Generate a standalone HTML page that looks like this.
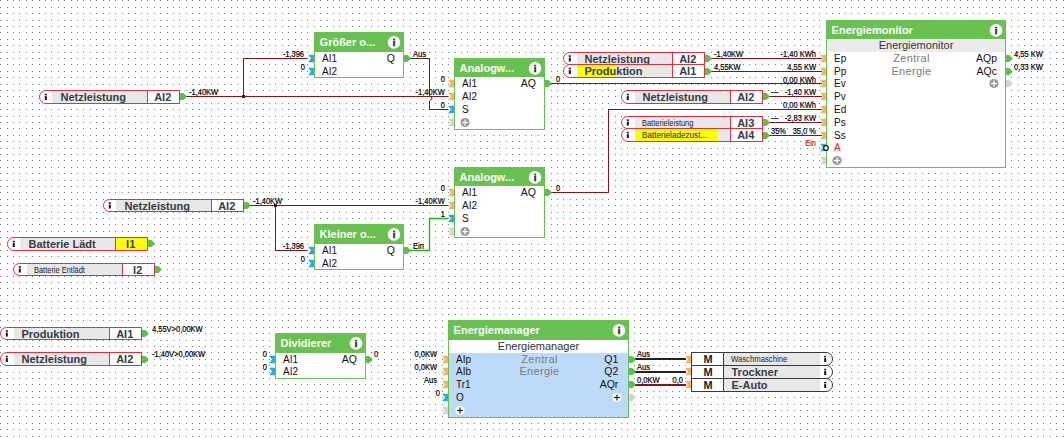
<!DOCTYPE html>
<html><head><meta charset="utf-8"><style>
html,body{margin:0;padding:0;width:1064px;height:439px;overflow:hidden;background:#fff;}
text{font-family:"Liberation Sans", sans-serif;}
</style></head><body>
<svg width="1064" height="439" viewBox="0 0 1064 439" style="position:absolute;left:0;top:0;font-family:&quot;Liberation Sans&quot;, sans-serif"><defs><pattern id="g" width="32" height="32" patternUnits="userSpaceOnUse"><rect x="0" y="0" width="1" height="1" fill="#7a7a7a"/><rect x="0" y="7" width="1" height="1" fill="#7a7a7a"/><rect x="0" y="13" width="1" height="1" fill="#7a7a7a"/><rect x="0" y="20" width="1" height="1" fill="#7a7a7a"/><rect x="0" y="26" width="1" height="1" fill="#7a7a7a"/><rect x="7" y="0" width="1" height="1" fill="#7a7a7a"/><rect x="7" y="7" width="1" height="1" fill="#7a7a7a"/><rect x="7" y="13" width="1" height="1" fill="#7a7a7a"/><rect x="7" y="20" width="1" height="1" fill="#7a7a7a"/><rect x="7" y="26" width="1" height="1" fill="#7a7a7a"/><rect x="13" y="0" width="1" height="1" fill="#7a7a7a"/><rect x="13" y="7" width="1" height="1" fill="#7a7a7a"/><rect x="13" y="13" width="1" height="1" fill="#7a7a7a"/><rect x="13" y="20" width="1" height="1" fill="#7a7a7a"/><rect x="13" y="26" width="1" height="1" fill="#7a7a7a"/><rect x="19" y="0" width="1" height="1" fill="#7a7a7a"/><rect x="19" y="7" width="1" height="1" fill="#7a7a7a"/><rect x="19" y="13" width="1" height="1" fill="#7a7a7a"/><rect x="19" y="20" width="1" height="1" fill="#7a7a7a"/><rect x="19" y="26" width="1" height="1" fill="#7a7a7a"/><rect x="26" y="0" width="1" height="1" fill="#7a7a7a"/><rect x="26" y="7" width="1" height="1" fill="#7a7a7a"/><rect x="26" y="13" width="1" height="1" fill="#7a7a7a"/><rect x="26" y="20" width="1" height="1" fill="#7a7a7a"/><rect x="26" y="26" width="1" height="1" fill="#7a7a7a"/></pattern></defs><rect width="1064" height="439" fill="#fff"/><rect width="1064" height="439" fill="url(#g)"/><g><line x1="186.00" y1="96.50" x2="448.00" y2="96.50" stroke="#8a1216" stroke-width="1" shape-rendering="crispEdges"/><polyline points="243.50,96.50 243.50,58.50 307.00,58.50" fill="none" stroke="#8a1216" stroke-width="1" shape-rendering="crispEdges" /><rect x="242.00" y="95.00" width="3.00" height="3.00" fill="#5a0c0f" shape-rendering="crispEdges"/><polyline points="410.00,58.50 429.50,58.50 429.50,95.50" fill="none" stroke="#333333" stroke-width="1" shape-rendering="crispEdges" /><path d="M429.5,95.5 L432.0,98 L432.0,99 L429.5,100.5" fill="none" stroke="#333333" stroke-width="1"/><polyline points="429.50,100.50 429.50,109.50 448.00,109.50" fill="none" stroke="#333333" stroke-width="1" shape-rendering="crispEdges" /><line x1="551.00" y1="83.50" x2="822.00" y2="83.50" stroke="#8a1216" stroke-width="1" shape-rendering="crispEdges"/><line x1="711.00" y1="58.50" x2="822.00" y2="58.50" stroke="#8a1216" stroke-width="1" shape-rendering="crispEdges"/><line x1="711.00" y1="71.50" x2="822.00" y2="71.50" stroke="#8a1216" stroke-width="1" shape-rendering="crispEdges"/><line x1="768.00" y1="96.50" x2="822.00" y2="96.50" stroke="#8a1216" stroke-width="1" shape-rendering="crispEdges"/><polyline points="551.00,192.50 608.50,192.50 608.50,109.50 822.00,109.50" fill="none" stroke="#8a1216" stroke-width="1" shape-rendering="crispEdges" /><line x1="768.00" y1="122.50" x2="822.00" y2="122.50" stroke="#8a1216" stroke-width="1" shape-rendering="crispEdges"/><line x1="768.00" y1="135.50" x2="822.00" y2="135.50" stroke="#8a1216" stroke-width="1" shape-rendering="crispEdges"/><line x1="250.00" y1="205.50" x2="448.00" y2="205.50" stroke="#8a1216" stroke-width="1" shape-rendering="crispEdges"/><polyline points="275.50,205.50 275.50,250.50 307.00,250.50" fill="none" stroke="#8a1216" stroke-width="1" shape-rendering="crispEdges" /><rect x="274.00" y="204.00" width="3.00" height="3.00" fill="#5a0c0f" shape-rendering="crispEdges"/><polyline points="410,250.5 429.5,250.5 429.5,218.5 448,218.5" fill="none" stroke="#22b422" stroke-width="1.4"/><line x1="635" y1="359" x2="686" y2="359" stroke="#222" stroke-width="2"/><line x1="635" y1="372" x2="686" y2="372" stroke="#222" stroke-width="2"/><line x1="635" y1="385" x2="686" y2="385" stroke="#8a1216" stroke-width="2"/><rect x="314.00" y="32.00" width="90.00" height="46.00" fill="#69c152" shape-rendering="crispEdges"/><rect x="315.00" y="52.00" width="88.00" height="25.00" fill="#fff" shape-rendering="crispEdges"/><text x="319.60" y="45.50" font-size="11" font-weight="bold" fill="#fff" text-anchor="start" >Größer o...</text><circle cx="394.00" cy="42.40" r="6.3" fill="#fff"/><text x="394.00" y="45.80" font-size="9.5" font-weight="bold" fill="#222" stroke="#222" stroke-width="0.45" text-anchor="middle">i</text><polygon points="308.00,54.70 314.00,54.70 314.00,62.30 308.00,62.30 311.00,58.50" fill="#26aee0"/><text x="322.00" y="62.00" font-size="10" font-weight="normal" fill="#111" text-anchor="start" >AI1</text><polygon points="308.00,67.70 314.00,67.70 314.00,75.30 308.00,75.30 311.00,71.50" fill="#26aee0"/><text x="322.00" y="75.00" font-size="10" font-weight="normal" fill="#111" text-anchor="start" >AI2</text><path d="M404.00,55.00 L407.00,55.00 Q407.60,55.00 408.20,55.70 L410.30,57.80 Q410.90,58.50 410.30,59.20 L408.20,61.30 Q407.60,62.00 407.00,62.00 L404.00,62.00 Z" fill="#5fbf4c"/><text x="395.00" y="62.00" font-size="10.5" font-weight="normal" fill="#111" text-anchor="end" >Q</text><rect x="454.00" y="58.00" width="91.00" height="72.00" fill="#69c152" shape-rendering="crispEdges"/><rect x="455.00" y="77.00" width="89.00" height="52.00" fill="#fff" shape-rendering="crispEdges"/><text x="459.60" y="71.50" font-size="11" font-weight="bold" fill="#fff" text-anchor="start" >Analogw...</text><circle cx="535.00" cy="68.40" r="6.3" fill="#fff"/><text x="535.00" y="71.80" font-size="9.5" font-weight="bold" fill="#222" stroke="#222" stroke-width="0.45" text-anchor="middle">i</text><polygon points="448.00,79.70 454.00,79.70 454.00,87.30 448.00,87.30 451.00,83.50" fill="#f5b366"/><text x="462.00" y="87.00" font-size="10" font-weight="normal" fill="#111" text-anchor="start" >AI1</text><polygon points="448.00,92.70 454.00,92.70 454.00,100.30 448.00,100.30 451.00,96.50" fill="#f5b366"/><text x="462.00" y="100.00" font-size="10" font-weight="normal" fill="#111" text-anchor="start" >AI2</text><polygon points="448.00,105.70 454.00,105.70 454.00,113.30 448.00,113.30 451.00,109.50" fill="#26aee0"/><text x="462.00" y="113.00" font-size="10" font-weight="normal" fill="#111" text-anchor="start" >S</text><polygon points="448.00,118.70 454.00,118.70 454.00,126.30 448.00,126.30 451.00,122.50" fill="#d4d4d4"/><circle cx="465.00" cy="122.50" r="4.6" fill="#9a9a9a"/><rect x="462.00" y="121.90" width="6" height="1.2" fill="#fff"/><rect x="464.40" y="119.50" width="1.2" height="6" fill="#fff"/><path d="M545.00,80.00 L548.00,80.00 Q548.60,80.00 549.20,80.70 L551.30,82.80 Q551.90,83.50 551.30,84.20 L549.20,86.30 Q548.60,87.00 548.00,87.00 L545.00,87.00 Z" fill="#5fbf4c"/><text x="536.00" y="87.00" font-size="10.5" font-weight="normal" fill="#111" text-anchor="end" >AQ</text><rect x="454.00" y="167.00" width="91.00" height="71.00" fill="#69c152" shape-rendering="crispEdges"/><rect x="455.00" y="186.00" width="89.00" height="51.00" fill="#fff" shape-rendering="crispEdges"/><text x="459.60" y="180.50" font-size="11" font-weight="bold" fill="#fff" text-anchor="start" >Analogw...</text><circle cx="535.00" cy="177.40" r="6.3" fill="#fff"/><text x="535.00" y="180.80" font-size="9.5" font-weight="bold" fill="#222" stroke="#222" stroke-width="0.45" text-anchor="middle">i</text><polygon points="448.00,188.70 454.00,188.70 454.00,196.30 448.00,196.30 451.00,192.50" fill="#f5b366"/><text x="462.00" y="196.00" font-size="10" font-weight="normal" fill="#111" text-anchor="start" >AI1</text><polygon points="448.00,201.70 454.00,201.70 454.00,209.30 448.00,209.30 451.00,205.50" fill="#f5b366"/><text x="462.00" y="209.00" font-size="10" font-weight="normal" fill="#111" text-anchor="start" >AI2</text><polygon points="448.00,214.70 454.00,214.70 454.00,222.30 448.00,222.30 451.00,218.50" fill="#26aee0"/><text x="462.00" y="222.00" font-size="10" font-weight="normal" fill="#111" text-anchor="start" >S</text><polygon points="448.00,227.70 454.00,227.70 454.00,235.30 448.00,235.30 451.00,231.50" fill="#d4d4d4"/><circle cx="465.00" cy="231.50" r="4.6" fill="#9a9a9a"/><rect x="462.00" y="230.90" width="6" height="1.2" fill="#fff"/><rect x="464.40" y="228.50" width="1.2" height="6" fill="#fff"/><path d="M545.00,189.00 L548.00,189.00 Q548.60,189.00 549.20,189.70 L551.30,191.80 Q551.90,192.50 551.30,193.20 L549.20,195.30 Q548.60,196.00 548.00,196.00 L545.00,196.00 Z" fill="#5fbf4c"/><text x="536.00" y="196.00" font-size="10.5" font-weight="normal" fill="#111" text-anchor="end" >AQ</text><rect x="314.00" y="224.00" width="90.00" height="46.00" fill="#69c152" shape-rendering="crispEdges"/><rect x="315.00" y="244.00" width="88.00" height="25.00" fill="#fff" shape-rendering="crispEdges"/><text x="319.60" y="237.50" font-size="11" font-weight="bold" fill="#fff" text-anchor="start" >Kleiner o...</text><circle cx="394.00" cy="234.40" r="6.3" fill="#fff"/><text x="394.00" y="237.80" font-size="9.5" font-weight="bold" fill="#222" stroke="#222" stroke-width="0.45" text-anchor="middle">i</text><polygon points="308.00,246.70 314.00,246.70 314.00,254.30 308.00,254.30 311.00,250.50" fill="#26aee0"/><text x="322.00" y="254.00" font-size="10" font-weight="normal" fill="#111" text-anchor="start" >AI1</text><polygon points="308.00,259.70 314.00,259.70 314.00,267.30 308.00,267.30 311.00,263.50" fill="#26aee0"/><text x="322.00" y="267.00" font-size="10" font-weight="normal" fill="#111" text-anchor="start" >AI2</text><path d="M404.00,247.00 L407.00,247.00 Q407.60,247.00 408.20,247.70 L410.30,249.80 Q410.90,250.50 410.30,251.20 L408.20,253.30 Q407.60,254.00 407.00,254.00 L404.00,254.00 Z" fill="#5fbf4c"/><text x="395.00" y="254.00" font-size="10.5" font-weight="normal" fill="#111" text-anchor="end" >Q</text><rect x="275.00" y="333.00" width="91.00" height="46.00" fill="#69c152" shape-rendering="crispEdges"/><rect x="276.00" y="353.00" width="89.00" height="25.00" fill="#fff" shape-rendering="crispEdges"/><text x="280.60" y="346.50" font-size="11" font-weight="bold" fill="#fff" text-anchor="start" >Dividierer</text><circle cx="356.00" cy="343.40" r="6.3" fill="#fff"/><text x="356.00" y="346.80" font-size="9.5" font-weight="bold" fill="#222" stroke="#222" stroke-width="0.45" text-anchor="middle">i</text><polygon points="269.00,355.70 275.00,355.70 275.00,363.30 269.00,363.30 272.00,359.50" fill="#26aee0"/><text x="283.00" y="363.00" font-size="10" font-weight="normal" fill="#111" text-anchor="start" >AI1</text><polygon points="269.00,367.70 275.00,367.70 275.00,375.30 269.00,375.30 272.00,371.50" fill="#26aee0"/><text x="283.00" y="375.00" font-size="10" font-weight="normal" fill="#111" text-anchor="start" >AI2</text><path d="M366.00,356.00 L369.00,356.00 Q369.60,356.00 370.20,356.70 L372.30,358.80 Q372.90,359.50 372.30,360.20 L370.20,362.30 Q369.60,363.00 369.00,363.00 L366.00,363.00 Z" fill="#5fbf4c"/><text x="357.00" y="363.00" font-size="10.5" font-weight="normal" fill="#111" text-anchor="end" >AQ</text><rect x="826.00" y="20.00" width="180.00" height="148.00" fill="#69c152" shape-rendering="crispEdges"/><rect x="827.00" y="39.00" width="178.00" height="128.00" fill="#fff" shape-rendering="crispEdges"/><rect x="827.00" y="39.00" width="178.00" height="13.00" fill="#ebebeb" shape-rendering="crispEdges"/><text x="916.00" y="49.30" font-size="11" font-weight="normal" fill="#333" text-anchor="middle" >Energiemonitor</text><text x="831.60" y="33.50" font-size="11" font-weight="bold" fill="#fff" text-anchor="start" >Energiemonitor</text><circle cx="996.00" cy="30.40" r="6.3" fill="#fff"/><text x="996.00" y="33.80" font-size="9.5" font-weight="bold" fill="#222" stroke="#222" stroke-width="0.45" text-anchor="middle">i</text><polygon points="820.00,54.70 826.00,54.70 826.00,62.30 820.00,62.30 823.00,58.50" fill="#f5b366"/><text x="834.00" y="62.00" font-size="10" font-weight="normal" fill="#111" text-anchor="start" >Ep</text><polygon points="820.00,67.70 826.00,67.70 826.00,75.30 820.00,75.30 823.00,71.50" fill="#f5b366"/><text x="834.00" y="75.00" font-size="10" font-weight="normal" fill="#111" text-anchor="start" >Pp</text><polygon points="820.00,79.70 826.00,79.70 826.00,87.30 820.00,87.30 823.00,83.50" fill="#f5b366"/><text x="834.00" y="87.00" font-size="10" font-weight="normal" fill="#111" text-anchor="start" >Ev</text><polygon points="820.00,92.70 826.00,92.70 826.00,100.30 820.00,100.30 823.00,96.50" fill="#f5b366"/><text x="834.00" y="100.00" font-size="10" font-weight="normal" fill="#111" text-anchor="start" >Pv</text><polygon points="820.00,105.70 826.00,105.70 826.00,113.30 820.00,113.30 823.00,109.50" fill="#f5b366"/><text x="834.00" y="113.00" font-size="10" font-weight="normal" fill="#111" text-anchor="start" >Ed</text><polygon points="820.00,118.70 826.00,118.70 826.00,126.30 820.00,126.30 823.00,122.50" fill="#f5b366"/><text x="834.00" y="126.00" font-size="10" font-weight="normal" fill="#111" text-anchor="start" >Ps</text><polygon points="820.00,131.70 826.00,131.70 826.00,139.30 820.00,139.30 823.00,135.50" fill="#f5b366"/><text x="834.00" y="139.00" font-size="10" font-weight="normal" fill="#111" text-anchor="start" >Ss</text><polygon points="820.00,143.70 826.00,143.70 826.00,151.30 820.00,151.30 823.00,147.50" fill="#26aee0"/><text x="834.00" y="151.00" font-size="10" font-weight="normal" fill="#e0202a" text-anchor="start" >A</text><polygon points="820.00,156.70 826.00,156.70 826.00,164.30 820.00,164.30 823.00,160.50" fill="#d4d4d4"/><circle cx="837.00" cy="160.50" r="4.6" fill="#9a9a9a"/><rect x="834.00" y="159.90" width="6" height="1.2" fill="#fff"/><rect x="836.40" y="157.50" width="1.2" height="6" fill="#fff"/><path d="M1006.00,55.00 L1009.00,55.00 Q1009.60,55.00 1010.20,55.70 L1012.30,57.80 Q1012.90,58.50 1012.30,59.20 L1010.20,61.30 Q1009.60,62.00 1009.00,62.00 L1006.00,62.00 Z" fill="#5fbf4c"/><text x="997.00" y="62.00" font-size="10.5" font-weight="normal" fill="#111" text-anchor="end" >AQp</text><path d="M1006.00,68.00 L1009.00,68.00 Q1009.60,68.00 1010.20,68.70 L1012.30,70.80 Q1012.90,71.50 1012.30,72.20 L1010.20,74.30 Q1009.60,75.00 1009.00,75.00 L1006.00,75.00 Z" fill="#5fbf4c"/><text x="997.00" y="75.00" font-size="10.5" font-weight="normal" fill="#111" text-anchor="end" >AQc</text><path d="M1006.00,80.00 L1009.00,80.00 Q1009.60,80.00 1010.20,80.70 L1012.30,82.80 Q1012.90,83.50 1012.30,84.20 L1010.20,86.30 Q1009.60,87.00 1009.00,87.00 L1006.00,87.00 Z" fill="#d4d4d4"/><circle cx="994.00" cy="83.50" r="4.6" fill="#9a9a9a"/><rect x="991.00" y="82.90" width="6" height="1.2" fill="#fff"/><rect x="993.40" y="80.50" width="1.2" height="6" fill="#fff"/><text x="911.50" y="62.00" font-size="11" font-weight="normal" fill="#7c7c7c" text-anchor="middle" letter-spacing="0.3">Zentral</text><text x="911.50" y="75.00" font-size="11" font-weight="normal" fill="#7c7c7c" text-anchor="middle" letter-spacing="0.3">Energie</text><rect x="448.00" y="320.00" width="181.00" height="98.00" fill="#69c152" shape-rendering="crispEdges"/><rect x="449.00" y="340.00" width="179.00" height="77.00" fill="#bddbf8" shape-rendering="crispEdges"/><rect x="449.00" y="340.00" width="179.00" height="13.00" fill="#ffffff" shape-rendering="crispEdges"/><text x="538.50" y="350.30" font-size="11" font-weight="normal" fill="#333" text-anchor="middle" >Energiemanager</text><text x="453.60" y="333.50" font-size="11" font-weight="bold" fill="#fff" text-anchor="start" >Energiemanager</text><circle cx="619.00" cy="330.40" r="6.3" fill="#fff"/><text x="619.00" y="333.80" font-size="9.5" font-weight="bold" fill="#222" stroke="#222" stroke-width="0.45" text-anchor="middle">i</text><polygon points="442.00,355.70 448.00,355.70 448.00,363.30 442.00,363.30 445.00,359.50" fill="#f5b366"/><text x="456.00" y="363.00" font-size="10" font-weight="normal" fill="#111" text-anchor="start" >AIp</text><polygon points="442.00,367.70 448.00,367.70 448.00,375.30 442.00,375.30 445.00,371.50" fill="#f5b366"/><text x="456.00" y="375.00" font-size="10" font-weight="normal" fill="#111" text-anchor="start" >AIb</text><polygon points="442.00,380.70 448.00,380.70 448.00,388.30 442.00,388.30 445.00,384.50" fill="#f5b366"/><text x="456.00" y="388.00" font-size="10" font-weight="normal" fill="#111" text-anchor="start" >Tr1</text><polygon points="442.00,393.70 448.00,393.70 448.00,401.30 442.00,401.30 445.00,397.50" fill="#26aee0"/><text x="456.00" y="401.00" font-size="10" font-weight="normal" fill="#111" text-anchor="start" >O</text><polygon points="442.00,406.70 448.00,406.70 448.00,414.30 442.00,414.30 445.00,410.50" fill="#d4d4d4"/><circle cx="460.00" cy="410.50" r="4.6" fill="#fff"/><rect x="457.00" y="409.90" width="6" height="1.2" fill="#222"/><rect x="459.40" y="407.50" width="1.2" height="6" fill="#222"/><path d="M629.00,356.00 L632.00,356.00 Q632.60,356.00 633.20,356.70 L635.30,358.80 Q635.90,359.50 635.30,360.20 L633.20,362.30 Q632.60,363.00 632.00,363.00 L629.00,363.00 Z" fill="#5fbf4c"/><text x="618.30" y="363.00" font-size="10.5" font-weight="normal" fill="#111" text-anchor="end" >Q1</text><path d="M629.00,368.00 L632.00,368.00 Q632.60,368.00 633.20,368.70 L635.30,370.80 Q635.90,371.50 635.30,372.20 L633.20,374.30 Q632.60,375.00 632.00,375.00 L629.00,375.00 Z" fill="#5fbf4c"/><text x="618.30" y="375.00" font-size="10.5" font-weight="normal" fill="#111" text-anchor="end" >Q2</text><path d="M629.00,381.00 L632.00,381.00 Q632.60,381.00 633.20,381.70 L635.30,383.80 Q635.90,384.50 635.30,385.20 L633.20,387.30 Q632.60,388.00 632.00,388.00 L629.00,388.00 Z" fill="#5fbf4c"/><text x="618.30" y="388.00" font-size="10.5" font-weight="normal" fill="#111" text-anchor="end" >AQr</text><path d="M629.00,394.00 L632.00,394.00 Q632.60,394.00 633.20,394.70 L635.30,396.80 Q635.90,397.50 635.30,398.20 L633.20,400.30 Q632.60,401.00 632.00,401.00 L629.00,401.00 Z" fill="#d4d4d4"/><circle cx="617.00" cy="397.50" r="4.6" fill="#fff"/><rect x="614.00" y="396.90" width="6" height="1.2" fill="#222"/><rect x="616.40" y="394.50" width="1.2" height="6" fill="#222"/><text x="539.50" y="363.00" font-size="11" font-weight="normal" fill="#7c7c7c" text-anchor="middle" letter-spacing="0.3">Zentral</text><text x="539.50" y="375.00" font-size="11" font-weight="normal" fill="#7c7c7c" text-anchor="middle" letter-spacing="0.3">Energie</text><circle cx="826" cy="148.00" r="2.3" fill="#fff" stroke="#111" stroke-width="1.2"/><path d="M46.00,90.50 H179.50 V103.50 H46.00 A6.50,6.50 0 0 1 46.00,90.50 Z" fill="#fff" stroke="#e2303e" stroke-width="1"/><rect x="52.00" y="91.00" width="95.00" height="12.00" fill="#e8e8e8" shape-rendering="crispEdges"/><line x1="147.50" y1="90.00" x2="147.50" y2="104.00" stroke="#e2303e" stroke-width="1" shape-rendering="crispEdges"/><rect x="44.80" y="93.80" width="2.00" height="1.60" fill="#111"/><rect x="44.80" y="96.10" width="2.00" height="3.90" fill="#111"/><text x="60.50" y="101.00" font-size="11" font-weight="bold" fill="#363b45" text-anchor="start" >Netzleistung</text><text x="162.70" y="101.00" font-size="11" font-weight="bold" fill="#363b45" text-anchor="middle" >AI2</text><path d="M180.00,93.00 L183.00,93.00 Q183.60,93.00 184.20,93.70 L186.30,95.80 Q186.90,96.50 186.30,97.20 L184.20,99.30 Q183.60,100.00 183.00,100.00 L180.00,100.00 Z" fill="#5fbf4c"/><path d="M569.50,52.50 H704.50 V64.50 H569.50 A6.00,6.00 0 0 1 569.50,52.50 Z" fill="#fff" stroke="#e2303e" stroke-width="1"/><rect x="577.00" y="53.00" width="95.00" height="11.00" fill="#e8e8e8" shape-rendering="crispEdges"/><line x1="672.50" y1="52.00" x2="672.50" y2="65.00" stroke="#e2303e" stroke-width="1" shape-rendering="crispEdges"/><rect x="568.80" y="55.30" width="2.00" height="1.60" fill="#111"/><rect x="568.80" y="57.60" width="2.00" height="3.90" fill="#111"/><text x="584.50" y="62.50" font-size="11" font-weight="bold" fill="#363b45" text-anchor="start" >Netzleistung</text><text x="687.70" y="62.50" font-size="11" font-weight="bold" fill="#363b45" text-anchor="middle" >AI2</text><path d="M705.00,55.00 L708.00,55.00 Q708.60,55.00 709.20,55.70 L711.30,57.80 Q711.90,58.50 711.30,59.20 L709.20,61.30 Q708.60,62.00 708.00,62.00 L705.00,62.00 Z" fill="#5fbf4c"/><path d="M570.00,64.50 H704.50 V77.50 H570.00 A6.50,6.50 0 0 1 570.00,64.50 Z" fill="#fff" stroke="#e2303e" stroke-width="1"/><rect x="577.00" y="65.00" width="95.00" height="12.00" fill="#e8e8e8" shape-rendering="crispEdges"/><rect x="577.00" y="65.00" width="38.00" height="12.00" fill="#ffff00" shape-rendering="crispEdges"/><line x1="672.50" y1="64.00" x2="672.50" y2="78.00" stroke="#e2303e" stroke-width="1" shape-rendering="crispEdges"/><rect x="568.80" y="67.80" width="2.00" height="1.60" fill="#111"/><rect x="568.80" y="70.10" width="2.00" height="3.90" fill="#111"/><text x="584.50" y="75.00" font-size="11" font-weight="bold" fill="#363b45" text-anchor="start" >Produktion</text><text x="687.70" y="75.00" font-size="11" font-weight="bold" fill="#363b45" text-anchor="middle" >AI1</text><path d="M705.00,68.00 L708.00,68.00 Q708.60,68.00 709.20,68.70 L711.30,70.80 Q711.90,71.50 711.30,72.20 L709.20,74.30 Q708.60,75.00 708.00,75.00 L705.00,75.00 Z" fill="#5fbf4c"/><path d="M628.00,90.50 H762.50 V103.50 H628.00 A6.50,6.50 0 0 1 628.00,90.50 Z" fill="#fff" stroke="#e2303e" stroke-width="1"/><rect x="635.00" y="91.00" width="95.00" height="12.00" fill="#e8e8e8" shape-rendering="crispEdges"/><line x1="730.50" y1="90.00" x2="730.50" y2="104.00" stroke="#e2303e" stroke-width="1" shape-rendering="crispEdges"/><rect x="626.80" y="93.80" width="2.00" height="1.60" fill="#111"/><rect x="626.80" y="96.10" width="2.00" height="3.90" fill="#111"/><text x="642.50" y="101.00" font-size="11" font-weight="bold" fill="#363b45" text-anchor="start" >Netzleistung</text><text x="745.70" y="101.00" font-size="11" font-weight="bold" fill="#363b45" text-anchor="middle" >AI2</text><path d="M763.00,93.00 L766.00,93.00 Q766.60,93.00 767.20,93.70 L769.30,95.80 Q769.90,96.50 769.30,97.20 L767.20,99.30 Q766.60,100.00 766.00,100.00 L763.00,100.00 Z" fill="#5fbf4c"/><path d="M627.50,116.50 H762.50 V128.50 H627.50 A6.00,6.00 0 0 1 627.50,116.50 Z" fill="#fff" stroke="#e2303e" stroke-width="1"/><rect x="635.00" y="117.00" width="95.00" height="11.00" fill="#e8e8e8" shape-rendering="crispEdges"/><line x1="730.50" y1="116.00" x2="730.50" y2="129.00" stroke="#e2303e" stroke-width="1" shape-rendering="crispEdges"/><rect x="626.80" y="119.30" width="2.00" height="1.60" fill="#111"/><rect x="626.80" y="121.60" width="2.00" height="3.90" fill="#111"/><text x="642.00" y="125.70" font-size="8.3" font-weight="normal" fill="#222" text-anchor="start" textLength="51.4" lengthAdjust="spacingAndGlyphs">Batterieleistung</text><text x="745.70" y="126.50" font-size="11" font-weight="bold" fill="#363b45" text-anchor="middle" >AI3</text><path d="M763.00,119.00 L766.00,119.00 Q766.60,119.00 767.20,119.70 L769.30,121.80 Q769.90,122.50 769.30,123.20 L767.20,125.30 Q766.60,126.00 766.00,126.00 L763.00,126.00 Z" fill="#5fbf4c"/><path d="M628.00,128.50 H762.50 V141.50 H628.00 A6.50,6.50 0 0 1 628.00,128.50 Z" fill="#fff" stroke="#e2303e" stroke-width="1"/><rect x="635.00" y="129.00" width="95.00" height="12.00" fill="#e8e8e8" shape-rendering="crispEdges"/><rect x="635.00" y="129.00" width="83.00" height="12.00" fill="#ffff00" shape-rendering="crispEdges"/><line x1="730.50" y1="128.00" x2="730.50" y2="142.00" stroke="#e2303e" stroke-width="1" shape-rendering="crispEdges"/><rect x="626.80" y="131.80" width="2.00" height="1.60" fill="#111"/><rect x="626.80" y="134.10" width="2.00" height="3.90" fill="#111"/><text x="642.00" y="138.20" font-size="8.3" font-weight="normal" fill="#222" text-anchor="start" textLength="65.2" lengthAdjust="spacingAndGlyphs">Batterieladezust...</text><text x="745.70" y="139.00" font-size="11" font-weight="bold" fill="#363b45" text-anchor="middle" >AI4</text><path d="M763.00,132.00 L766.00,132.00 Q766.60,132.00 767.20,132.70 L769.30,134.80 Q769.90,135.50 769.30,136.20 L767.20,138.30 Q766.60,139.00 766.00,139.00 L763.00,139.00 Z" fill="#5fbf4c"/><path d="M109.50,199.50 H243.50 V211.50 H109.50 A6.00,6.00 0 0 1 109.50,199.50 Z" fill="#fff" stroke="#e2303e" stroke-width="1"/><rect x="116.00" y="200.00" width="95.00" height="11.00" fill="#e8e8e8" shape-rendering="crispEdges"/><line x1="211.50" y1="199.00" x2="211.50" y2="212.00" stroke="#e2303e" stroke-width="1" shape-rendering="crispEdges"/><rect x="108.80" y="202.30" width="2.00" height="1.60" fill="#111"/><rect x="108.80" y="204.60" width="2.00" height="3.90" fill="#111"/><text x="124.50" y="209.50" font-size="11" font-weight="bold" fill="#363b45" text-anchor="start" >Netzleistung</text><text x="226.70" y="209.50" font-size="11" font-weight="bold" fill="#363b45" text-anchor="middle" >AI2</text><path d="M244.00,202.00 L247.00,202.00 Q247.60,202.00 248.20,202.70 L250.30,204.80 Q250.90,205.50 250.30,206.20 L248.20,208.30 Q247.60,209.00 247.00,209.00 L244.00,209.00 Z" fill="#5fbf4c"/><path d="M14.00,237.50 H147.50 V250.50 H14.00 A6.50,6.50 0 0 1 14.00,237.50 Z" fill="#fff" stroke="#e2303e" stroke-width="1"/><rect x="20.00" y="238.00" width="95.00" height="12.00" fill="#e8e8e8" shape-rendering="crispEdges"/><rect x="116.00" y="238.00" width="31.00" height="12.00" fill="#ffff00" shape-rendering="crispEdges"/><line x1="115.50" y1="237.00" x2="115.50" y2="251.00" stroke="#e2303e" stroke-width="1" shape-rendering="crispEdges"/><rect x="12.80" y="240.80" width="2.00" height="1.60" fill="#111"/><rect x="12.80" y="243.10" width="2.00" height="3.90" fill="#111"/><text x="28.50" y="248.00" font-size="11" font-weight="bold" fill="#363b45" text-anchor="start" >Batterie Lädt</text><text x="130.70" y="248.00" font-size="11" font-weight="bold" fill="#363b45" text-anchor="middle" >I1</text><path d="M148.00,240.00 L151.00,240.00 Q151.60,240.00 152.20,240.70 L154.30,242.80 Q154.90,243.50 154.30,244.20 L152.20,246.30 Q151.60,247.00 151.00,247.00 L148.00,247.00 Z" fill="#5fbf4c"/><path d="M19.50,263.50 H154.50 V275.50 H19.50 A6.00,6.00 0 0 1 19.50,263.50 Z" fill="#fff" stroke="#e2303e" stroke-width="1"/><rect x="27.00" y="264.00" width="95.00" height="11.00" fill="#e8e8e8" shape-rendering="crispEdges"/><line x1="122.50" y1="263.00" x2="122.50" y2="276.00" stroke="#e2303e" stroke-width="1" shape-rendering="crispEdges"/><rect x="18.80" y="266.30" width="2.00" height="1.60" fill="#111"/><rect x="18.80" y="268.60" width="2.00" height="3.90" fill="#111"/><text x="34.00" y="272.70" font-size="8.3" font-weight="normal" fill="#222" text-anchor="start" textLength="50.9" lengthAdjust="spacingAndGlyphs">Batterie Entlädt</text><text x="137.70" y="273.50" font-size="11" font-weight="bold" fill="#363b45" text-anchor="middle" >I2</text><path d="M155.00,266.00 L158.00,266.00 Q158.60,266.00 159.20,266.70 L161.30,268.80 Q161.90,269.50 161.30,270.20 L159.20,272.30 Q158.60,273.00 158.00,273.00 L155.00,273.00 Z" fill="#5fbf4c"/><path d="M6.50,327.50 H141.50 V339.50 H6.50 A6.00,6.00 0 0 1 6.50,327.50 Z" fill="#fff" stroke="#e2303e" stroke-width="1"/><rect x="14.00" y="328.00" width="95.00" height="11.00" fill="#e8e8e8" shape-rendering="crispEdges"/><line x1="109.50" y1="327.00" x2="109.50" y2="340.00" stroke="#e2303e" stroke-width="1" shape-rendering="crispEdges"/><rect x="5.80" y="330.30" width="2.00" height="1.60" fill="#111"/><rect x="5.80" y="332.60" width="2.00" height="3.90" fill="#111"/><text x="21.50" y="337.50" font-size="11" font-weight="bold" fill="#363b45" text-anchor="start" >Produktion</text><text x="124.70" y="337.50" font-size="11" font-weight="bold" fill="#363b45" text-anchor="middle" >AI1</text><path d="M142.00,330.00 L145.00,330.00 Q145.60,330.00 146.20,330.70 L148.30,332.80 Q148.90,333.50 148.30,334.20 L146.20,336.30 Q145.60,337.00 145.00,337.00 L142.00,337.00 Z" fill="#5fbf4c"/><path d="M7.00,352.50 H141.50 V365.50 H7.00 A6.50,6.50 0 0 1 7.00,352.50 Z" fill="#fff" stroke="#e2303e" stroke-width="1"/><rect x="14.00" y="353.00" width="95.00" height="12.00" fill="#e8e8e8" shape-rendering="crispEdges"/><line x1="109.50" y1="352.00" x2="109.50" y2="366.00" stroke="#e2303e" stroke-width="1" shape-rendering="crispEdges"/><rect x="5.80" y="355.80" width="2.00" height="1.60" fill="#111"/><rect x="5.80" y="358.10" width="2.00" height="3.90" fill="#111"/><text x="21.50" y="363.00" font-size="11" font-weight="bold" fill="#363b45" text-anchor="start" >Netzleistung</text><text x="124.70" y="363.00" font-size="11" font-weight="bold" fill="#363b45" text-anchor="middle" >AI2</text><path d="M142.00,356.00 L145.00,356.00 Q145.60,356.00 146.20,356.70 L148.30,358.80 Q148.90,359.50 148.30,360.20 L146.20,362.30 Q145.60,363.00 145.00,363.00 L142.00,363.00 Z" fill="#5fbf4c"/><path d="M691.50,352.50 H826.00 A6.50,6.50 0 0 1 826.00,365.50 H691.50 Z" fill="#fff" stroke="#3a3a3a" stroke-width="1"/><rect x="724.00" y="353.00" width="96.00" height="12.00" fill="#e8e8e8" shape-rendering="crispEdges"/><line x1="723.50" y1="352.00" x2="723.50" y2="366.00" stroke="#3a3a3a" stroke-width="1" shape-rendering="crispEdges"/><text x="708.00" y="363.00" font-size="11" font-weight="bold" fill="#222" text-anchor="middle" >M</text><text x="731.00" y="362.20" font-size="8.3" font-weight="normal" fill="#222" text-anchor="start" textLength="56.2" lengthAdjust="spacingAndGlyphs">Waschmaschine</text><rect x="824.20" y="355.80" width="2.00" height="1.60" fill="#111"/><rect x="824.20" y="358.10" width="2.00" height="3.90" fill="#111"/><polygon points="685.00,355.70 691.00,355.70 691.00,363.30 685.00,363.30 688.00,359.50" fill="#f5b366"/><path d="M691.50,365.50 H826.00 A6.50,6.50 0 0 1 826.00,378.50 H691.50 Z" fill="#fff" stroke="#3a3a3a" stroke-width="1"/><rect x="724.00" y="366.00" width="96.00" height="12.00" fill="#e8e8e8" shape-rendering="crispEdges"/><line x1="723.50" y1="365.00" x2="723.50" y2="379.00" stroke="#3a3a3a" stroke-width="1" shape-rendering="crispEdges"/><text x="708.00" y="376.00" font-size="11" font-weight="bold" fill="#222" text-anchor="middle" >M</text><text x="731.50" y="376.00" font-size="11" font-weight="bold" fill="#363b45" text-anchor="start" >Trockner</text><rect x="824.20" y="368.80" width="2.00" height="1.60" fill="#111"/><rect x="824.20" y="371.10" width="2.00" height="3.90" fill="#111"/><polygon points="685.00,367.70 691.00,367.70 691.00,375.30 685.00,375.30 688.00,371.50" fill="#f5b366"/><path d="M691.50,378.50 H826.00 A6.50,6.50 0 0 1 826.00,391.50 H691.50 Z" fill="#fff" stroke="#3a3a3a" stroke-width="1"/><rect x="724.00" y="379.00" width="96.00" height="12.00" fill="#e8e8e8" shape-rendering="crispEdges"/><line x1="723.50" y1="378.00" x2="723.50" y2="392.00" stroke="#3a3a3a" stroke-width="1" shape-rendering="crispEdges"/><text x="708.00" y="389.00" font-size="11" font-weight="bold" fill="#222" text-anchor="middle" >M</text><text x="731.50" y="389.00" font-size="11" font-weight="bold" fill="#363b45" text-anchor="start" >E-Auto</text><rect x="824.20" y="381.80" width="2.00" height="1.60" fill="#111"/><rect x="824.20" y="384.10" width="2.00" height="3.90" fill="#111"/><polygon points="685.00,380.70 691.00,380.70 691.00,388.30 685.00,388.30 688.00,384.50" fill="#f5b366"/></g><text x="189.00" y="94.70" font-size="8.2" font-weight="normal" fill="#000" text-anchor="start" stroke="#000" stroke-width="0.2" textLength="29.18" lengthAdjust="spacingAndGlyphs">-1,40KW</text><text x="304.00" y="56.70" font-size="8.2" font-weight="normal" fill="#000" text-anchor="end" stroke="#000" stroke-width="0.2" textLength="21.26" lengthAdjust="spacingAndGlyphs">-1,396</text><text x="305.00" y="69.70" font-size="8.2" font-weight="normal" fill="#000" text-anchor="end" stroke="#000" stroke-width="0.2" textLength="4.17" lengthAdjust="spacingAndGlyphs">0</text><text x="413.00" y="56.70" font-size="8.2" font-weight="normal" fill="#000" text-anchor="start" stroke="#000" stroke-width="0.2" textLength="12.92" lengthAdjust="spacingAndGlyphs">Aus</text><text x="444.80" y="81.70" font-size="8.2" font-weight="normal" fill="#000" text-anchor="end" stroke="#000" stroke-width="0.2" textLength="4.17" lengthAdjust="spacingAndGlyphs">0</text><text x="444.80" y="94.70" font-size="8.2" font-weight="normal" fill="#000" text-anchor="end" stroke="#000" stroke-width="0.2" textLength="29.18" lengthAdjust="spacingAndGlyphs">-1,40KW</text><text x="444.80" y="107.70" font-size="8.2" font-weight="normal" fill="#000" text-anchor="end" stroke="#000" stroke-width="0.2" textLength="4.17" lengthAdjust="spacingAndGlyphs">0</text><text x="556.00" y="81.70" font-size="8.2" font-weight="normal" fill="#000" text-anchor="start" stroke="#000" stroke-width="0.2" textLength="4.17" lengthAdjust="spacingAndGlyphs">0</text><text x="714.00" y="56.70" font-size="8.2" font-weight="normal" fill="#000" text-anchor="start" stroke="#000" stroke-width="0.2" textLength="29.18" lengthAdjust="spacingAndGlyphs">-1,40KW</text><text x="714.00" y="69.70" font-size="8.2" font-weight="normal" fill="#000" text-anchor="start" stroke="#000" stroke-width="0.2" textLength="26.68" lengthAdjust="spacingAndGlyphs">4,55KW</text><text x="816.00" y="56.70" font-size="8.2" font-weight="normal" fill="#000" text-anchor="end" stroke="#000" stroke-width="0.2" textLength="35.43" lengthAdjust="spacingAndGlyphs">-1,40 KWh</text><text x="816.00" y="69.70" font-size="8.2" font-weight="normal" fill="#000" text-anchor="end" stroke="#000" stroke-width="0.2" textLength="28.76" lengthAdjust="spacingAndGlyphs">4,55 KW</text><text x="816.00" y="82.70" font-size="8.2" font-weight="normal" fill="#000" text-anchor="end" stroke="#000" stroke-width="0.2" textLength="32.93" lengthAdjust="spacingAndGlyphs">0,00 KWh</text><text x="771.00" y="94.70" font-size="8.2" font-weight="normal" fill="#000" text-anchor="start" stroke="#000" stroke-width="0.2" textLength="7.49" lengthAdjust="spacingAndGlyphs">---</text><text x="816.00" y="94.70" font-size="8.2" font-weight="normal" fill="#000" text-anchor="end" stroke="#000" stroke-width="0.2" textLength="31.26" lengthAdjust="spacingAndGlyphs">-1,40 KW</text><text x="816.00" y="107.70" font-size="8.2" font-weight="normal" fill="#000" text-anchor="end" stroke="#000" stroke-width="0.2" textLength="32.93" lengthAdjust="spacingAndGlyphs">0,00 KWh</text><text x="771.00" y="120.70" font-size="8.2" font-weight="normal" fill="#000" text-anchor="start" stroke="#000" stroke-width="0.2" textLength="7.49" lengthAdjust="spacingAndGlyphs">---</text><text x="816.00" y="120.70" font-size="8.2" font-weight="normal" fill="#000" text-anchor="end" stroke="#000" stroke-width="0.2" textLength="31.26" lengthAdjust="spacingAndGlyphs">-2,83 KW</text><text x="771.00" y="133.70" font-size="8.2" font-weight="normal" fill="#000" text-anchor="start" stroke="#000" stroke-width="0.2" textLength="15.01" lengthAdjust="spacingAndGlyphs">35%</text><text x="816.00" y="133.70" font-size="8.2" font-weight="normal" fill="#000" text-anchor="end" stroke="#000" stroke-width="0.2" textLength="23.35" lengthAdjust="spacingAndGlyphs">35,0 %</text><text x="816.00" y="145.70" font-size="8.2" font-weight="normal" fill="#e0202a" text-anchor="end" stroke="#e0202a" stroke-width="0.2" textLength="10.84" lengthAdjust="spacingAndGlyphs">Ein</text><text x="1014.00" y="56.70" font-size="8.2" font-weight="normal" fill="#000" text-anchor="start" stroke="#000" stroke-width="0.2" textLength="28.76" lengthAdjust="spacingAndGlyphs">4,55 KW</text><text x="1014.00" y="69.70" font-size="8.2" font-weight="normal" fill="#000" text-anchor="start" stroke="#000" stroke-width="0.2" textLength="28.76" lengthAdjust="spacingAndGlyphs">0,33 KW</text><text x="556.00" y="190.70" font-size="8.2" font-weight="normal" fill="#000" text-anchor="start" stroke="#000" stroke-width="0.2" textLength="4.17" lengthAdjust="spacingAndGlyphs">0</text><text x="444.80" y="190.70" font-size="8.2" font-weight="normal" fill="#000" text-anchor="end" stroke="#000" stroke-width="0.2" textLength="4.17" lengthAdjust="spacingAndGlyphs">0</text><text x="444.80" y="203.70" font-size="8.2" font-weight="normal" fill="#000" text-anchor="end" stroke="#000" stroke-width="0.2" textLength="29.18" lengthAdjust="spacingAndGlyphs">-1,40KW</text><text x="444.80" y="216.70" font-size="8.2" font-weight="normal" fill="#000" text-anchor="end" stroke="#000" stroke-width="0.2" textLength="4.17" lengthAdjust="spacingAndGlyphs">1</text><text x="253.00" y="203.70" font-size="8.2" font-weight="normal" fill="#000" text-anchor="start" stroke="#000" stroke-width="0.2" textLength="29.18" lengthAdjust="spacingAndGlyphs">-1,40KW</text><text x="304.00" y="248.70" font-size="8.2" font-weight="normal" fill="#000" text-anchor="end" stroke="#000" stroke-width="0.2" textLength="21.26" lengthAdjust="spacingAndGlyphs">-1,396</text><text x="305.00" y="261.70" font-size="8.2" font-weight="normal" fill="#000" text-anchor="end" stroke="#000" stroke-width="0.2" textLength="4.17" lengthAdjust="spacingAndGlyphs">0</text><text x="413.00" y="248.70" font-size="8.2" font-weight="normal" fill="#000" text-anchor="start" stroke="#000" stroke-width="0.2" textLength="10.84" lengthAdjust="spacingAndGlyphs">Ein</text><text x="152.00" y="331.70" font-size="8.2" font-weight="normal" fill="#000" text-anchor="start" stroke="#000" stroke-width="0.2" textLength="50.66" lengthAdjust="spacingAndGlyphs">4,55V&gt;0,00KW</text><text x="152.00" y="356.70" font-size="8.2" font-weight="normal" fill="#000" text-anchor="start" stroke="#000" stroke-width="0.2" textLength="53.15" lengthAdjust="spacingAndGlyphs">-1,40V&gt;0,00KW</text><text x="267.00" y="356.70" font-size="8.2" font-weight="normal" fill="#000" text-anchor="end" stroke="#000" stroke-width="0.2" textLength="4.17" lengthAdjust="spacingAndGlyphs">0</text><text x="267.00" y="369.70" font-size="8.2" font-weight="normal" fill="#000" text-anchor="end" stroke="#000" stroke-width="0.2" textLength="4.17" lengthAdjust="spacingAndGlyphs">0</text><text x="374.00" y="356.70" font-size="8.2" font-weight="normal" fill="#000" text-anchor="start" stroke="#000" stroke-width="0.2" textLength="4.17" lengthAdjust="spacingAndGlyphs">0</text><text x="437.00" y="356.70" font-size="8.2" font-weight="normal" fill="#000" text-anchor="end" stroke="#000" stroke-width="0.2" textLength="22.51" lengthAdjust="spacingAndGlyphs">0,0KW</text><text x="437.00" y="369.70" font-size="8.2" font-weight="normal" fill="#000" text-anchor="end" stroke="#000" stroke-width="0.2" textLength="22.51" lengthAdjust="spacingAndGlyphs">0,0KW</text><text x="437.00" y="382.70" font-size="8.2" font-weight="normal" fill="#000" text-anchor="end" stroke="#000" stroke-width="0.2" textLength="12.92" lengthAdjust="spacingAndGlyphs">Aus</text><text x="440.00" y="395.70" font-size="8.2" font-weight="normal" fill="#000" text-anchor="end" stroke="#000" stroke-width="0.2" textLength="4.17" lengthAdjust="spacingAndGlyphs">0</text><text x="637.00" y="356.70" font-size="8.2" font-weight="normal" fill="#000" text-anchor="start" stroke="#000" stroke-width="0.2" textLength="12.92" lengthAdjust="spacingAndGlyphs">Aus</text><text x="637.00" y="369.70" font-size="8.2" font-weight="normal" fill="#000" text-anchor="start" stroke="#000" stroke-width="0.2" textLength="12.92" lengthAdjust="spacingAndGlyphs">Aus</text><text x="637.00" y="382.70" font-size="8.2" font-weight="normal" fill="#000" text-anchor="start" stroke="#000" stroke-width="0.2" textLength="22.51" lengthAdjust="spacingAndGlyphs">0,0KW</text><text x="683.00" y="382.70" font-size="8.2" font-weight="normal" fill="#000" text-anchor="end" stroke="#000" stroke-width="0.2" textLength="10.43" lengthAdjust="spacingAndGlyphs">0,0</text></svg>
</body></html>
